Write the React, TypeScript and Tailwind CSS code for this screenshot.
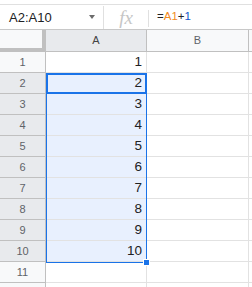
const rows = [1, 2, 3, 4, 5, 6, 7, 8, 9, 10, 11, 12];

function isSelected(r: number) {
  return r >= 2 && r <= 10;
}

export default function App() {
  return (
    <div className="w-[252px] h-[287px] overflow-hidden bg-white font-['Liberation_Sans',Arial,sans-serif] text-[#202124]">
      {/* Formula bar */}
      <div className="h-[4px]" />
      <div className="flex h-[25px] items-center border-t border-[#e0e0e0]">
        <div className="flex w-[103px] items-center justify-between pl-[9px] pr-[8px]">
          <span className="text-[13px] leading-none">A2:A10</span>
          <span className="h-0 w-0 border-x-[3.5px] border-t-[4px] border-x-transparent border-t-[#6b6b6b]" />
        </div>
        <div className="h-[23px] w-px bg-[#e0e0e0]" />
        <div className="flex w-[44px] items-center justify-center font-['Liberation_Serif',serif] text-[19px] italic leading-none text-[#c6c6c6]">
          fx
        </div>
        <div className="mt-[3px] h-[17px] w-px bg-[#e0e0e0]" />
        <div className="pl-[8px] text-[11.5px] leading-none">
          =<span className="text-[#f28b22]">A1</span>+<span className="text-[#1155cc]">1</span>
        </div>
      </div>

      {/* Column headers */}
      <div className="flex h-[23px] border-t border-[#c8c8c8]">
        <div className="w-[46px] border-b-[4px] border-r-[4px] border-[#c0c0c0] bg-[#f8f9fa]" />
        <div className="flex w-[101px] items-center justify-center border-b border-r border-[#c0c0c0] bg-[#e8eaed] text-[11px] text-[#444]">
          A
        </div>
        <div className="flex w-[102px] items-center justify-center border-b border-r border-[#c0c0c0] bg-[#f8f9fa] text-[11px] text-[#5f6368]">
          B
        </div>
        <div className="flex-1 border-b border-[#c0c0c0] bg-[#f8f9fa]" />
      </div>

      {/* Grid body */}
      <div className="relative">
        {rows.map((r) => (
          <div key={r} className="flex h-[21px]">
            <div
              className={`flex w-[46px] items-center justify-center border-b border-r border-[#c0c0c0] text-[11px] text-[#5f6368] ${
                isSelected(r) ? "bg-[#e8eaed]" : "bg-[#f8f9fa]"
              }`}
            >
              {r <= 11 ? r : ""}
            </div>
            <div
              className={`flex w-[101px] items-center justify-end border-b border-r border-[#e2e2e2] pr-[4px] text-[13.5px] ${
                isSelected(r) ? "bg-[#e8f0fe]" : "bg-white"
              }`}
            >
              {r <= 10 ? r : ""}
            </div>
            <div className="w-[102px] border-b border-r border-[#e2e2e2]" />
            <div className="flex-1 border-b border-[#e2e2e2]" />
          </div>
        ))}

        {/* Selection range A2:A10 */}
        <div className="pointer-events-none absolute left-[46px] top-[21px] h-[190px] w-[101px] border border-[#1a73e8]" />
        {/* Active cell A2 */}
        <div className="pointer-events-none absolute left-[46px] top-[21px] h-[21px] w-[101px] border-2 border-[#1a73e8]" />
        {/* Fill handle */}
        <div className="absolute left-[143px] top-[207px] h-[7px] w-[7px] border border-white bg-[#1a73e8]" />
      </div>
    </div>
  );
}
